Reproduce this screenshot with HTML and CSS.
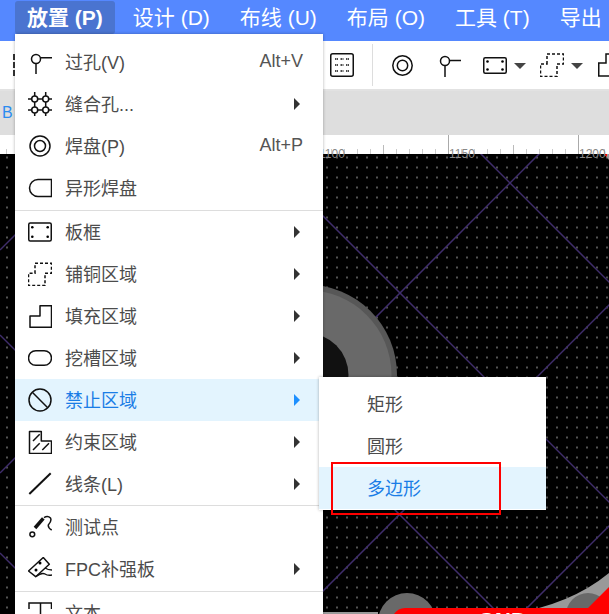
FILE: index.html
```html
<!DOCTYPE html>
<html lang="zh">
  <head>
    <meta charset="UTF-8" />
    <title>放置</title>
    <link rel="stylesheet" href="styles.css">
  </head>
  <body>
    <div class="app">
      <!-- 顶部菜单 -->
      <nav class="menubar">
        <span class="menubar-item active">放置 (P)</span>
        <span class="menubar-item">设计 (D)</span>
        <span class="menubar-item">布线 (U)</span>
        <span class="menubar-item">布局 (O)</span>
        <span class="menubar-item">工具 (T)</span>
        <span class="menubar-item">导出</span>
      </nav>

      <!-- 工具栏 -->
      <div class="toolbar">
        <span class="toolbar-edge"></span>
        <svg class="tool-grid" width="24" height="24" viewBox="0 0 24 24"><rect x="0.750" y="0.750" width="22.500" height="22.500" rx="2" class="line"/><path d="M5 6h3M10.500 6h3M16 6h3M5 12h3M10.500 12h3M16 12h3M5 18h3M10.500 18h3M16 18h3" class="line" stroke-dasharray="1.500 0.500"/></svg>
        <span class="toolbar-sep"></span>
        <svg class="tool-pad" width="21" height="21" viewBox="0 0 21 21"><circle cx="10.500" cy="10.500" r="9.700" class="line"/><circle cx="10.500" cy="10.500" r="5.200" class="line"/></svg>
        <svg class="tool-via" width="23" height="24" viewBox="0 0 23 24"><circle cx="7" cy="8" r="4.500" class="line"/><path d="M11.500 7.500H23M7 12.500V24" class="line"/></svg>
        <svg class="tool-board" width="24" height="17" viewBox="0 0 24 17"><rect x="0.750" y="0.750" width="22.500" height="15.500" rx="1.500" class="line"/><circle cx="4.500" cy="4.500" r="1.300"/><circle cx="19.500" cy="4.500" r="1.300"/><circle cx="4.500" cy="12.500" r="1.300"/><circle cx="19.500" cy="12.500" r="1.300"/></svg>
        <span class="caret caret-board"></span>
        <svg class="tool-copper" width="24" height="24" viewBox="0 0 24 24"><path d="M7 11V1H23.500V11H17V23.500H0.500V11z" class="line" stroke-dasharray="3 2"/></svg>
        <span class="caret caret-copper"></span>
        <svg class="tool-fill" width="24" height="24" viewBox="0 0 24 24"><path d="M8 10V1H23.500V23H0.750V10z" class="line"/></svg>
      </div>

      <div class="tabbar"><span class="tab-label">B</span></div>

      <!-- 标尺 -->
      <div class="ruler">
        <span class="ruler-num num-a">1100</span>
        <span class="ruler-num num-b">1150</span>
        <span class="ruler-num num-c">1200</span>
      </div>

      <!-- 画布 -->
      <div class="canvas">
        <svg class="board" width="609" height="460" viewBox="0 154 609 460">
          <g stroke="#3f2d6b" stroke-width="1.500" fill="none">
            <path d="M180 73L700 593"/>
            <path d="M327 0L700 373"/>
            <path d="M693 0L0 693"/>
            <path d="M914 0L300 614"/>
            <path d="M250 0L0 250"/>
            <path d="M473 0L0 473"/>
            <path d="M0 335L300 635"/>
            <path d="M0 553L80 633"/>
            <path d="M300 415L520 635"/>
            <path d="M1135 0L500 635"/>
          </g>
          <circle cx="306.500" cy="375" r="90.500" fill="#575757"/>
          <circle cx="306.500" cy="375" r="85" fill="#696969"/>
          <circle cx="306.500" cy="375" r="42" fill="#111"/>
          <path d="M320 612H378V614H320z" fill="#999"/>
          <path d="M510 614Q570 605 609 573V614Z" fill="#999"/>
          <circle cx="407" cy="622" r="29" fill="#696969"/>
          <circle cx="588" cy="615" r="22" fill="#696969"/>
          <path d="M394 614Q398 608 405 608H588L609 587V614Z" fill="#f00"/>
          <text class="net-name" x="478" y="628">GND</text>
          <path d="M604 154H609V160Z" fill="#999"/>
          <path d="M604 154H607V157Z" fill="#f00"/>
        </svg>
      </div>

      <!-- 放置菜单 -->
      <ul class="menu main-menu">
        <li class="menu-row">
          <svg class="menu-icon" viewBox="0 0 24 24"><circle cx="8" cy="9" r="4.500" class="line"/><path d="M12.500 7.700H24M8 13.500V24" class="line"/></svg>
          <span class="menu-label">过孔(V)</span><span class="shortcut">Alt+V</span>
        </li>
        <li class="menu-row">
          <svg class="menu-icon" viewBox="0 0 24 24"><path d="M6.700 0V24M17.700 0V24M0 7H24M0 18H24" class="line"/><g class="knot"><circle cx="6.700" cy="7" r="3"/><circle cx="17.700" cy="7" r="3"/><circle cx="6.700" cy="18" r="3"/><circle cx="17.700" cy="18" r="3"/></g></svg>
          <span class="menu-label">缝合孔...</span><span class="arrow"></span>
        </li>
        <li class="menu-row">
          <svg class="menu-icon" viewBox="0 0 24 24"><circle cx="12" cy="12" r="10" class="line"/><circle cx="12" cy="12" r="5.500" class="line"/></svg>
          <span class="menu-label">焊盘(P)</span><span class="shortcut">Alt+P</span>
        </li>
        <li class="menu-row">
          <svg class="menu-icon" viewBox="0 0 24 24"><path d="M10 3.500H23.500V20.500H10A8.500 8.500 0 0 1 10 3.500z" class="line"/></svg>
          <span class="menu-label">异形焊盘</span>
        </li>
        <li class="menu-sep"></li>
        <li class="menu-row">
          <svg class="menu-icon" viewBox="0 0 24 24"><rect x="0.750" y="3" width="22.500" height="18" rx="1.500" class="line"/><circle cx="4.300" cy="7.300" r="1.300"/><circle cx="19.700" cy="7.300" r="1.300"/><circle cx="4.300" cy="16.700" r="1.300"/><circle cx="19.700" cy="16.700" r="1.300"/></svg>
          <span class="menu-label">板框</span><span class="arrow"></span>
        </li>
        <li class="menu-row">
          <svg class="menu-icon" viewBox="0 0 24 24"><path d="M7 11.300V1.300H23.500V11.300H17V23.500H0.500V11.300z" class="line" stroke-dasharray="3 2"/></svg>
          <span class="menu-label">铺铜区域</span><span class="arrow"></span>
        </li>
        <li class="menu-row">
          <svg class="menu-icon" viewBox="0 0 24 24"><path d="M12 12V1.700H23.500V23.300H2V12z" class="line" stroke-linejoin="round"/></svg>
          <span class="menu-label">填充区域</span><span class="arrow"></span>
        </li>
        <li class="menu-row">
          <svg class="menu-icon" viewBox="0 0 24 24"><rect x="0.500" y="4.700" width="23" height="14.600" rx="7.300" class="line"/></svg>
          <span class="menu-label">挖槽区域</span><span class="arrow"></span>
        </li>
        <li class="menu-row current">
          <svg class="menu-icon" viewBox="0 0 24 24"><circle cx="12" cy="12" r="11" class="line"/><path d="M4.300 4.300L19.700 19.700" class="line"/></svg>
          <span class="menu-label">禁止区域</span><span class="arrow"></span>
        </li>
        <li class="menu-row">
          <svg class="menu-icon" viewBox="0 0 24 24"><path d="M1.500 1.500H13.300V11H23.500V23.500H1.500z" class="line" stroke-linejoin="round"/><path d="M5 11L11.700 4.300M5 20L11.700 13.300M14.300 20L21 13.300" class="line"/></svg>
          <span class="menu-label">约束区域</span><span class="arrow"></span>
        </li>
        <li class="menu-row">
          <svg class="menu-icon" viewBox="0 0 24 24"><path d="M1.300 22L22.700 1.300" class="line thick"/></svg>
          <span class="menu-label">线条(L)</span><span class="arrow"></span>
        </li>
        <li class="menu-sep tight"></li>
        <li class="menu-row">
          <svg class="menu-icon" viewBox="0 0 24 24"><circle cx="4.300" cy="19.300" r="2.400" class="line"/><path d="M7 13L15.300 3.300" class="line heavy"/><path d="M16 2.700Q19.700 0 22.500 3Q24 6 20.300 10Q20 13 23.700 15" class="line"/></svg>
          <span class="menu-label">测试点</span>
        </li>
        <li class="menu-row">
          <svg class="menu-icon" viewBox="0 0 24 24"><path d="M0.500 14L15.300 0.500L21.300 7.300L7.700 19.700z" class="line" stroke-linejoin="round"/><path d="M8 19.500Q14 15 17 17Q20 19 24 18M17 11Q20 13 24 13" class="line"/><circle cx="12" cy="6" r="1.500"/><circle cx="8" cy="13" r="1.500"/></svg>
          <span class="menu-label">FPC补强板</span><span class="arrow"></span>
        </li>
        <li class="menu-sep"></li>
        <li class="menu-row">
          <svg class="menu-icon" viewBox="0 0 24 24"><path d="M1 8V2H23.500V8M12.500 2V24" class="line"/></svg>
          <span class="menu-label">文本</span>
        </li>
      </ul>

      <!-- 子菜单 -->
      <ul class="menu sub-menu">
        <li class="menu-row sub-row">矩形</li>
        <li class="menu-row sub-row">圆形</li>
        <li class="menu-row sub-row current">多边形</li>
      </ul>
      <div class="red-box"></div>
    </div>
  </body>
</html>
```
FILE: styles.css
```css
html,
body {
  margin: 0;
  height: 100%;
  overflow: hidden;
}
body {
  font-family: "Liberation Sans", "Noto Sans CJK SC", sans-serif;
  background: #000;
}
.app {
  position: relative;
  width: 609px;
  height: 614px;
  overflow: hidden;
  display: flex;
  flex-direction: column;
}
svg .line {
  fill: none;
  stroke: #111;
  stroke-width: 1.5;
}
svg .line.thick {
  stroke-width: 2;
}
svg .line.heavy {
  stroke-width: 3.5;
}
.knot circle {
  fill: #fff;
  stroke: #111;
  stroke-width: 1.5;
}
.menubar {
  height: 41px;
  flex: none;
  background: #5588ff;
  display: flex;
  align-items: flex-start;
  padding-left: 15px;
  box-sizing: border-box;
}
.menubar-item {
  height: 33px;
  margin-top: 1px;
  line-height: 34px;
  padding: 0 12px;
  margin-right: 6px;
  color: #fff;
  font-size: 21px;
  white-space: nowrap;
  border-radius: 3px;
}
.menubar-item.active {
  background: #4a74d0;
  font-weight: bold;
}
.toolbar {
  height: 48px;
  flex: none;
  background: #fff;
  display: flex;
  align-items: center;
  padding-left: 13px;
  border-bottom: 2px solid #e2e2e2;
}
.toolbar-edge {
  flex: none;
  height: 22px;
  margin-right: 315px;
  border-left: 2px dashed #333;
}
.toolbar svg {
  flex: none;
}
.tool-grid {
  margin-right: 18px;
}
.toolbar-sep {
  flex: none;
  width: 1px;
  height: 42px;
  background: #ddd;
  margin-right: 19px;
}
.tool-pad {
  margin-right: 25px;
}
.tool-via {
  margin-right: 22px;
}
.tool-board {
  margin-right: 7px;
}
.caret {
  flex: none;
  border: 6px solid transparent;
  border-top: 6px solid #444;
  border-bottom: 0;
  margin-top: 2px;
}
.caret-board {
  margin-right: 14px;
}
.caret-copper {
  margin: 2px 15px 0 7px;
}
.tabbar {
  height: 44px;
  flex: none;
  background: #dedede;
  padding-left: 2px;
}
.tab-label {
  color: #2b8cf0;
  font-size: 16px;
  line-height: 44px;
}
.ruler {
  height: 19px;
  flex: none;
  position: relative;
  z-index: 1;
  background-color: #fff;
  background-image:
    linear-gradient(to right, #aaa 1px, transparent 1px),
    linear-gradient(to right, #bbb 1px, transparent 1px),
    linear-gradient(to right, #ccc 1px, transparent 1px);
  background-repeat: repeat-x;
  background-size: 130px 19px, 65px 9px, 13px 5px;
  background-position: 58px bottom, 58px bottom, 6px bottom;
}
.ruler-num {
  position: absolute;
  top: 13px;
  font-size: 12px;
  color: #888;
  line-height: 13px;
}
.num-a { left: 319px; }
.num-b { left: 449px; }
.num-c { left: 579px; }
.canvas {
  flex: 1;
  position: relative;
  background-color: #000;
  background-image: radial-gradient(circle, #8c8c8c 0.5px, transparent 1px);
  background-size: 10px 10px;
  background-position: 2px -1.5px;
}
.board {
  display: block;
}
.net-name {
  fill: #fff;
  font-size: 22px;
  font-weight: bold;
}
.menu {
  position: absolute;
  z-index: 2;
  margin: 0;
  padding: 0;
  list-style: none;
  background: #fff;
  box-shadow: 0 0 3px rgba(0, 0, 0, 0.3);
}
.main-menu {
  left: 15px;
  top: 34px;
  width: 308px;
  height: 600px;
  padding-top: 7px;
}
/* 文字比行中线略高一点 */
.menu-row {
  height: 42px;
  box-sizing: border-box;
  display: flex;
  align-items: center;
  font-size: 18px;
  color: #4c4c4c;
  padding: 0 20px 2px 13px;
}
.menu-icon {
  width: 24px;
  height: 24px;
  flex: none;
  margin: 2px 13px 0 0;
}
.menu-label {
  flex: 1;
}
.shortcut {
  color: #555;
}
.arrow {
  border: 6px solid transparent;
  border-left: 6px solid #333;
  border-right: 0;
  margin: 2px 3px 0 0;
}
.menu-sep {
  height: 1px;
  margin-top: 1px;
  background: #ddd;
}
.menu-sep.tight {
  margin-top: 0;
}
.menu-row.current {
  background: #e3f4fe;
  color: #1a7de6;
}
.menu-row.current .arrow {
  border-left-color: #1e90ff;
}
.sub-menu {
  left: 319px;
  top: 377px;
  width: 227px;
  height: 133px;
  padding-top: 6px;
  box-sizing: border-box;
}
.sub-row {
  padding-left: 48px;
}
.red-box {
  position: absolute;
  z-index: 3;
  left: 331px;
  top: 462px;
  width: 166px;
  height: 49px;
  border: 2px solid #f00;
}
```
